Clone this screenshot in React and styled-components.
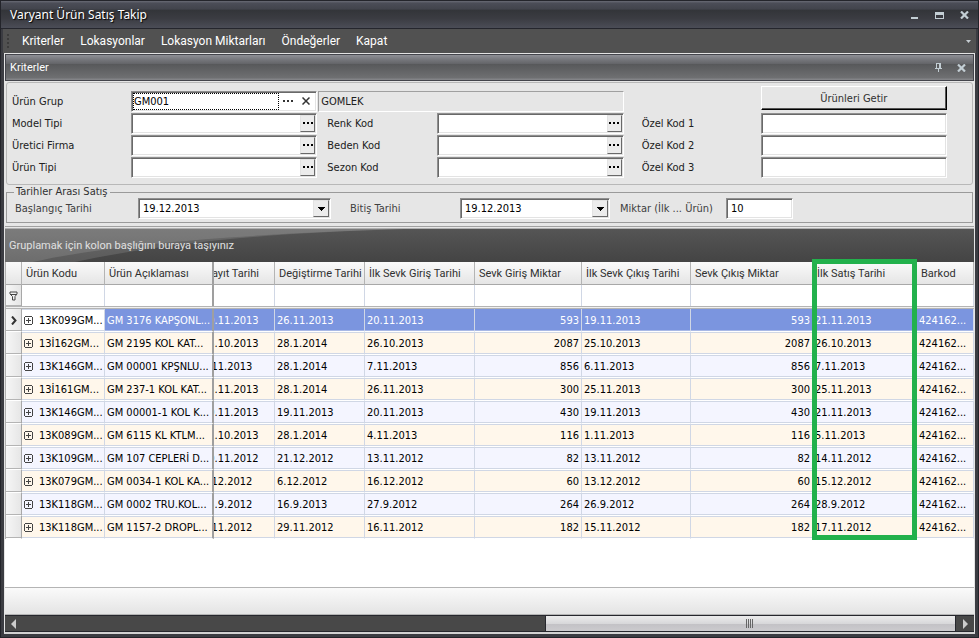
import React from "react";
import styled, { createGlobalStyle, css } from "styled-components";

const menuItems = ["Kriterler", "Lokasyonlar", "Lokasyon Miktarları", "Öndeğerler", "Kapat"];

const columns = [
  { title: "", width: 16 },
  { title: "Ürün Kodu", width: 83 },
  { title: "Ürün Açıklaması", width: 109 },
  { title: "Kayıt Tarihi", width: 61 },
  { title: "Değiştirme Tarihi", width: 90 },
  { title: "İlk Sevk Giriş Tarihi", width: 110 },
  { title: "Sevk Giriş Miktar", width: 107 },
  { title: "İlk Sevk Çıkış Tarihi", width: 109 },
  { title: "Sevk Çıkış Miktar", width: 122 },
  { title: "İlk Satış Tarihi", width: 104 },
  { title: "Barkod" }
];

const rows = [
  ["13K099GM...", "GM 3176 KAPŞONL...", "19.11.2013", "26.11.2013", "20.11.2013", "593", "19.11.2013", "593", "21.11.2013", "424162..."],
  ["13İ162GM...", "GM 2195 KOL KAT...", "25.10.2013", "28.1.2014", "26.10.2013", "2087", "25.10.2013", "2087", "26.10.2013", "424162..."],
  ["13K146GM...", "GM 00001 KPŞNLU...", "6.11.2013", "28.1.2014", "7.11.2013", "856", "6.11.2013", "856", "7.11.2013", "424162..."],
  ["13İ161GM...", "GM 237-1 KOL KAT...", "25.11.2013", "28.1.2014", "26.11.2013", "300", "25.11.2013", "300", "25.11.2013", "424162..."],
  ["13K146GM...", "GM 00001-1 KOL K...", "19.11.2013", "19.11.2013", "20.11.2013", "430", "19.11.2013", "430", "21.11.2013", "424162..."],
  ["13K089GM...", "GM 6115 KL KTLM...", "31.10.2013", "28.1.2014", "4.11.2013", "116", "1.11.2013", "116", "5.11.2013", "424162..."],
  ["13K109GM...", "GM 107 CEPLERİ D...", "10.11.2012", "21.12.2012", "13.11.2012", "82", "13.11.2012", "82", "14.11.2012", "424162..."],
  ["13K079GM...", "GM 0034-1 KOL KA...", "5.12.2012", "6.12.2012", "16.12.2012", "60", "13.12.2012", "60", "15.12.2012", "424162..."],
  ["13K118GM...", "GM 0002 TRU.KOL...", "25.9.2012", "16.9.2013", "27.9.2012", "264", "26.9.2012", "264", "28.9.2012", "424162..."],
  ["13K118GM...", "GM 1157-2 DROPL...", "5.11.2012", "29.11.2012", "16.11.2012", "182", "15.11.2012", "182", "17.11.2012", "424162..."]
];

function LookupField({ id, label, second }) {
  return (
    <>
      <Label htmlFor={id} $indent={second ? 10 : 0}>{label}</Label>
      <Field>
        <Input id={id} />
        <LookupButton aria-label={label + " seç"}><Dots /></LookupButton>
      </Field>
    </>
  );
}

function TextField({ id, label }) {
  return (
    <>
      <Label htmlFor={id} $indent={18}>{label}</Label>
      <Field>
        <Input id={id} />
      </Field>
    </>
  );
}

function DateField({ id, label, indent }) {
  return (
    <>
      <Label htmlFor={id} $indent={indent} $soft>{label}</Label>
      <Field>
        <DateSelect id={id}>
          <option>19.12.2013</option>
        </DateSelect>
        <DropArrow>
          <svg width="7" height="4" shapeRendering="crispEdges"><path d="M0 0h7v1H0zM1 1h5v1H1zM2 2h3v1H2zM3 3h1v1H3z" fill="#000" /></svg>
        </DropArrow>
      </Field>
    </>
  );
}

function Dots() {
  return (
    <svg width="10" height="2" shapeRendering="crispEdges">
      <path d="M0 0h2v2H0zM4 0h2v2H4zM8 0h2v2H8z" fill="currentColor" />
    </svg>
  );
}

function Cross() {
  return (
    <svg width="9" height="8" viewBox="0 0 9 8">
      <path d="M1 0.500L8 7.500M8 0.500L1 7.500" stroke="currentColor" strokeWidth="2.200" />
    </svg>
  );
}

function Expander() {
  return (
    <svg width="9" height="9" shapeRendering="crispEdges">
      <path d="M1 0h7v1H1zM1 8h7v1H1zM0 1h1v7H0zM8 1h1v7H8zM2 4h5v1H2zM4 2h1v5H4z" fill="#444" />
    </svg>
  );
}

function App() {
  return (
    <Window>
      <GlobalStyle />
      <TitleBar>
        <Title>Varyant Ürün Satış Takip</Title>
        <WindowButton aria-label="Simge durumuna küçült">
          <svg width="9" height="8" shapeRendering="crispEdges"><path d="M1 6h7v2H1z" fill="currentColor" /></svg>
        </WindowButton>
        <WindowButton aria-label="Ekranı kapla">
          <svg width="9" height="8" shapeRendering="crispEdges"><path d="M0 1h9v7H0zM1 4v3h7V4z" fill="currentColor" fillRule="evenodd" /></svg>
        </WindowButton>
        <WindowButton aria-label="Pencereyi kapat"><Cross /></WindowButton>
      </TitleBar>
      <MenuBar>
        <Grip width="3" height="15" shapeRendering="crispEdges">
          <path d="M0 0h2v2H0zM0 4h2v2H0zM0 8h2v2H0zM0 12h2v2H0z" fill="#3c3c3c" />
        </Grip>
        {menuItems.map((item) => (
          <MenuButton key={item}>{item}</MenuButton>
        ))}
        <MenuMore aria-label="Diğer">
          <svg width="5" height="3"><path d="M0 0h5L2.500 3z" fill="#c6cdd2" /></svg>
        </MenuMore>
      </MenuBar>
      <Content>
        <PanelHeader>
          <PanelTitle>Kriterler</PanelTitle>
          <WindowButton aria-label="Paneli sabitle">
            <svg width="7" height="9" shapeRendering="crispEdges">
              <path d="M1 0h5v5h1v1H4v3H3V6H0V5h1zM2 1v4h2V1z" fill="currentColor" fillRule="evenodd" />
            </svg>
          </WindowButton>
          <WindowButton aria-label="Paneli kapat"><Cross /></WindowButton>
        </PanelHeader>
        <PanelBody>
          <CriteriaBox>
            <Label htmlFor="grup">Ürün Grup</Label>
            <Field>
              <Input id="grup" defaultValue="GM001" $focused />
              <FlatButton aria-label="Ürün grup seç"><Dots /></FlatButton>
              <FlatButton aria-label="Temizle">
                <svg width="8" height="8"><path d="M0.500 0.500l7 7M7.500 0.500l-7 7" stroke="#333" strokeWidth="1.500" /></svg>
              </FlatButton>
            </Field>
            <ReadOnly readOnly aria-label="Ürün grup adı" value="GOMLEK" />
            <span />
            <FetchButton>Ürünleri Getir</FetchButton>
            <LookupField id="model" label="Model Tipi" />
            <LookupField id="renk" label="Renk Kod" second />
            <TextField id="ozel1" label="Özel Kod 1" />
            <LookupField id="uretici" label="Üretici Firma" />
            <LookupField id="beden" label="Beden Kod" second />
            <TextField id="ozel2" label="Özel Kod 2" />
            <LookupField id="tip" label="Ürün Tipi" />
            <LookupField id="sezon" label="Sezon Kod" second />
            <TextField id="ozel3" label="Özel Kod 3" />
          </CriteriaBox>
          <DateBox>
            <Legend>Tarihler Arası Satış</Legend>
            <DateGrid>
              <DateField id="baslangic" label="Başlangıç Tarihi" indent={0} />
              <DateField id="bitis" label="Bitiş Tarihi" indent={19} />
              <Label htmlFor="miktar" $indent={10} $soft>Miktar (İlk ... Ürün)</Label>
              <Field>
                <Input id="miktar" defaultValue="10" />
              </Field>
            </DateGrid>
          </DateBox>
        </PanelBody>
        <GridPanel>
          <GroupBar>
            <Shine viewBox="0 0 400 33" preserveAspectRatio="none">
              <path d="M0 0H400C260 4 110 14 28 33H0z" fill="#fff" fillOpacity="0.120" />
              <path d="M0 0H400C260 4 160 14 70 33H0z" fill="#fff" fillOpacity="0.120" />
            </Shine>
            <GroupText>Gruplamak için kolon başlığını buraya taşıyınız</GroupText>
          </GroupBar>
          <TableArea>
            <Table>
              <colgroup>
                {columns.map((c, i) => <col key={i} width={c.width} />)}
              </colgroup>
              <thead>
                <tr>
                  {columns.map((c, i) => (
                    <HeadCell key={i} $fixedEdge={i === 2} $scrolled={i === 3}>{c.title}</HeadCell>
                  ))}
                </tr>
              </thead>
              <tbody>
                <tr>
                  {columns.map((c, i) =>
                    i === 0 ? (
                      <Indicator key={i} $filter>
                        <svg width="9" height="10">
                          <path d="M1 1h7v2L6 5.500V9H3.500V5.500L1 3zM1.500 3.500h6" fill="none" stroke="#444" />
                        </svg>
                      </Indicator>
                    ) : (
                      <FilterCell key={i} $fixedEdge={i === 2} />
                    )
                  )}
                </tr>
                <tr>
                  <Divider colSpan={columns.length} />
                </tr>
                {rows.map((row, r) => (
                  <tr key={r}>
                    <Indicator>
                      {r === 0 && (
                        <svg width="6" height="9"><path d="M1 0.500L4.500 4.500L1 8.500" fill="none" stroke="#333" strokeWidth="2" /></svg>
                      )}
                    </Indicator>
                    {row.map((value, i) => (
                      <Cell
                        key={i}
                        $odd={r % 2 === 1}
                        $selected={r === 0 && i > 0}
                        $focusCell={r === 0 && i === 0}
                        $right={i === 5 || i === 7}
                        $fixedEdge={i === 1}
                        $scrolled={i === 2}
                      >
                        {i === 0 ? <CodeCell><Expander />{value}</CodeCell> : value}
                      </Cell>
                    ))}
                  </tr>
                ))}
              </tbody>
            </Table>
            <Highlight />
          </TableArea>
          <GridFooter />
          <ScrollBar>
            <ScrollButton aria-label="Sola kaydır">
              <svg width="5" height="10"><path d="M5 0v10L0 5z" fill="#ccc" /></svg>
            </ScrollButton>
            <span />
            <Thumb aria-label="Kaydırma çubuğu">
              <svg width="8" height="9" shapeRendering="crispEdges">
                <path d="M0 0h1v9H0zM2 0h1v9H2zM4 0h1v9H4zM6 0h1v9H6z" fill="#666" />
              </svg>
            </Thumb>
            <ScrollButton aria-label="Sağa kaydır">
              <svg width="5" height="10"><path d="M0 0v10L5 5z" fill="#ccc" /></svg>
            </ScrollButton>
          </ScrollBar>
        </GridPanel>
      </Content>
    </Window>
  );
}

const formFont = `11px "DejaVu Sans Condensed", "DejaVu Sans", sans-serif`;
const captionFont = `11px Roboto, sans-serif`;
const titleFont = `12px "Noto Sans", sans-serif`;
const menuFont = `12px Roboto, sans-serif`;

const GlobalStyle = createGlobalStyle`
  * {
    box-sizing: border-box;
  }
  body {
    margin: 0;
    font: ${formFont};
  }
  button, input, select {
    font: inherit;
    border-radius: 0;
    margin: 0;
  }
  svg {
    display: block;
    flex: none;
  }
`;

const Window = styled.div`
  display: flex;
  flex-direction: column;
  min-height: 100vh;
  background-color: #3b3c42;
  border: 1px solid #23242a;
  border-top: 0;
`;

const TitleBar = styled.header`
  display: flex;
  align-items: center;
  gap: 5px;
  height: 29px;
  padding: 0 4px 0 9px;
  border-top: 1px solid #24252b;
  border-bottom: 1px solid #25262d;
  background: linear-gradient(#696b75, #4b4d57 8%, #42444c 30%, #333539 34%, #3b3c42 65%, #4b4d57);
`;

const Title = styled.h1`
  flex: 1;
  margin: 0;
  font: ${titleFont};
  color: #fff;
  text-shadow: 1px 1px 1px #000;
`;

const WindowButton = styled.button`
  display: flex;
  align-items: center;
  justify-content: center;
  width: 20px;
  height: 20px;
  padding: 0;
  border: 0;
  background: none;
  color: #c3ced4;
`;

const MenuBar = styled.nav`
  display: flex;
  align-items: center;
  height: 24px;
  margin: 0 2px;
  padding-left: 4px;
  background-color: #515151;
`;

const Grip = styled.svg`
  margin-right: 4px;
`;

const MenuButton = styled.button`
  height: 22px;
  padding: 0 8px;
  border: 0;
  background: none;
  font: ${menuFont};
  color: #fff;
  white-space: nowrap;
`;

const MenuMore = styled(WindowButton)`
  width: 16px;
  margin-left: auto;
`;

const Content = styled.main`
  display: flex;
  flex-direction: column;
  flex: 1;
  margin: 0 3px 3px;
  border: 1px solid #e4e4e4;
  border-bottom: 2px solid #d2d2d2;
  background-color: #e6e6e6;
`;

const PanelHeader = styled.div`
  display: flex;
  align-items: center;
  gap: 3px;
  height: 27px;
  padding: 0 2px 0 4px;
  border: 1px solid #44454c;
  background: linear-gradient(#8f9096, #74757a 20%, #65666a 34%, #57585a 36%, #6e6f71 90%, #88898d);
`;

const PanelTitle = styled.h2`
  flex: 1;
  margin: 0;
  font: ${captionFont};
  color: #fff;
`;

const PanelBody = styled.div`
  display: flex;
  flex-direction: column;
  gap: 1px;
  padding: 1px 1px 3px;
  border-bottom: 1px solid #a0a0a0;
`;

const CriteriaBox = styled.section`
  display: grid;
  grid-template-columns: 119px minmax(0, 1fr) 120px minmax(0, 1fr) 137px minmax(0, 1fr);
  grid-auto-rows: 22px;
  align-items: center;
  padding: 7px 25px 6px 5px;
  border: 1px solid #b8b8b8;
  border-radius: 3px;
`;

const Label = styled.label`
  padding-left: ${(p) => p.$indent || 0}px;
  color: ${(p) => (p.$soft ? "#404040" : "#202020")};
  white-space: nowrap;
`;

const sunken = css`
  border: 1px solid;
  border-color: #8f8f8f #fff #fff #8f8f8f;
  box-shadow: inset 1px 1px #696969, inset -1px -1px #e3e3e3;
`;

const Field = styled.div`
  display: flex;
  align-items: stretch;
  position: relative;
  height: 21px;
  padding: 1px;
  background-color: #fff;
  ${sunken}
`;

const Input = styled.input`
  flex: 1;
  min-width: 0;
  padding: 0 3px;
  border: 0;
  outline: 0;
  background: none;
  color: #000;
  ${(p) => p.$focused && css`
    padding: 0;
    border: 1px dotted #000;
  `}
`;

const LookupButton = styled.button`
  display: flex;
  align-items: center;
  justify-content: center;
  width: 15px;
  padding: 0;
  border: 1px solid;
  border-color: #e3e3e3 #696969 #696969 #e3e3e3;
  background-color: #ececec;
  color: #000;
`;

const FlatButton = styled(LookupButton)`
  width: 18px;
  border: 0;
  background: none;
  color: #333;
`;

const ReadOnly = styled.input`
  grid-column: span 2;
  height: 21px;
  margin-left: 1px;
  padding: 0 2px;
  border: 1px solid;
  border-color: #a0a0a0 #fff #fff #a0a0a0;
  background: none;
  color: #202020;
`;

const FetchButton = styled.button`
  align-self: end;
  height: 24px;
  margin-bottom: 2px;
  border: 1px solid;
  border-color: #fff #000 #000 #fff;
  box-shadow: inset -1px -1px #555;
  background-color: #e6e6e6;
  color: #303030;
`;

const DateBox = styled.fieldset`
  min-width: 0;
  margin: 0;
  padding: 0 179px 3px 8px;
  border: 1px solid #9a9a9a;
`;

const Legend = styled.legend`
  margin-left: -1px;
  padding: 0 2px;
  line-height: 12px;
  color: #303030;
`;

const DateGrid = styled.div`
  display: grid;
  grid-template-columns: 123px minmax(0, 193fr) 129px minmax(0, 150fr) 116px minmax(0, 67fr);
  align-items: center;
`;

const DateSelect = styled.select`
  flex: 1;
  min-width: 0;
  padding: 0 3px;
  border: 0;
  outline: 0;
  appearance: none;
  background: none;
  color: #000;
`;

const DropArrow = styled.span`
  position: absolute;
  top: 1px;
  right: 1px;
  bottom: 1px;
  display: flex;
  align-items: center;
  justify-content: center;
  width: 16px;
  border: 1px solid;
  border-color: #e3e3e3 #696969 #696969 #e3e3e3;
  background-color: #ececec;
  pointer-events: none;
`;

const GridPanel = styled.section`
  display: flex;
  flex-direction: column;
  flex: 1;
  margin-top: 1px;
  border: 1px solid #b0b0b0;
  border-width: 1px 0 0;
  background-color: #fff;
`;

const GroupBar = styled.div`
  display: flex;
  align-items: center;
  position: relative;
  height: 33px;
  background: linear-gradient(#555, #444);
`;

const Shine = styled.svg`
  position: absolute;
  top: 0;
  left: 0;
  width: 400px;
  height: 33px;
`;

const GroupText = styled.span`
  position: relative;
  padding-left: 4px;
  font: ${captionFont};
  color: #e0e0e0;
`;

const TableArea = styled.div`
  position: relative;
  flex: 1;
`;

const Table = styled.table`
  width: 100%;
  table-layout: fixed;
  border-collapse: separate;
  border-spacing: 0;
  border-left: 1px solid #b0b0b0;
`;

const fixedEdge = css`
  border-right: 2px solid #9f9f9f;
`;

const HeadCell = styled.th`
  height: 23px;
  padding: 0 0 0 4px;
  border-right: 1px solid #b4b4b4;
  border-bottom: 1px solid #a8a8a8;
  background: linear-gradient(#fafafa, #e5e5e5);
  font: ${captionFont};
  color: #303030;
  text-align: left;
  white-space: nowrap;
  overflow: hidden;
  ${(p) => p.$fixedEdge && fixedEdge}
  ${(p) => p.$scrolled && "text-indent: -13px;"}
`;

const FilterCell = styled.td`
  height: 21px;
  padding: 0;
  border-right: 1px solid #d0d7e5;
  ${(p) => p.$fixedEdge && fixedEdge}
`;

const Divider = styled.td`
  height: 3px;
  padding: 0;
  border: 1px solid #b4b4b4;
  border-width: 1px 0;
  background-color: #f0f0f0;
`;

const Indicator = styled.td`
  height: ${(p) => (p.$filter ? 21 : 23)}px;
  padding: 0;
  border-right: 1px solid #a8a8a8;
  border-bottom: ${(p) => (p.$filter ? 0 : 1)}px solid #fff;
  box-shadow: inset 0 -1px #b4b4b4;
  background: linear-gradient(90deg, #f6f6f6, #e6e6e6);
  svg {
    margin: 0 auto;
  }
`;

const Cell = styled.td`
  height: 23px;
  padding: 0 2px;
  border-right: 1px solid #d0d7e5;
  border-bottom: 1px solid #fff;
  box-shadow: inset 0 1px #d0d7e5, inset 0 -1px #d0d7e5;
  background-color: ${(p) => (p.$odd ? "#fff7eb" : "#f4f5ff")};
  color: #000;
  text-align: ${(p) => (p.$right ? "right" : "left")};
  white-space: nowrap;
  overflow: hidden;
  ${(p) => p.$focusCell && "background-color: #fff;"}
  ${(p) => p.$selected && css`
    background-color: #7b95df;
    box-shadow: inset 0 -1px #a9b9e6;
    color: #fff;
  `}
  ${(p) => p.$fixedEdge && fixedEdge}
  ${(p) => p.$scrolled && "text-indent: -14px;"}
`;

const CodeCell = styled.div`
  display: flex;
  align-items: center;
  gap: 6px;
`;

const Highlight = styled.div`
  position: absolute;
  top: -3px;
  left: 807px;
  width: 105px;
  height: 281px;
  border: 5px solid #22b14c;
  pointer-events: none;
`;

const GridFooter = styled.div`
  height: 28px;
  border: 1px solid #b4b4b4;
  border-width: 1px 0;
  background: linear-gradient(#fafafa, #e4e4e4);
`;

const ScrollBar = styled.div`
  display: grid;
  grid-template-columns: 17px minmax(0, 522fr) minmax(0, 411fr) 18px;
  height: 17px;
  border: 1px solid #26272d;
  border-width: 1px 0;
  background-color: #484848;
`;

const ScrollButton = styled.button`
  display: flex;
  align-items: center;
  justify-content: center;
  padding: 0;
  border: 0;
  background: none;
`;

const Thumb = styled.button`
  display: flex;
  align-items: center;
  justify-content: center;
  padding: 0;
  border: 1px solid #26272d;
  border-width: 0 1px;
  background: linear-gradient(#ececec, #d8d8da 50%, #c2c1c5 51%, #cccbce);
`;

export default App;
